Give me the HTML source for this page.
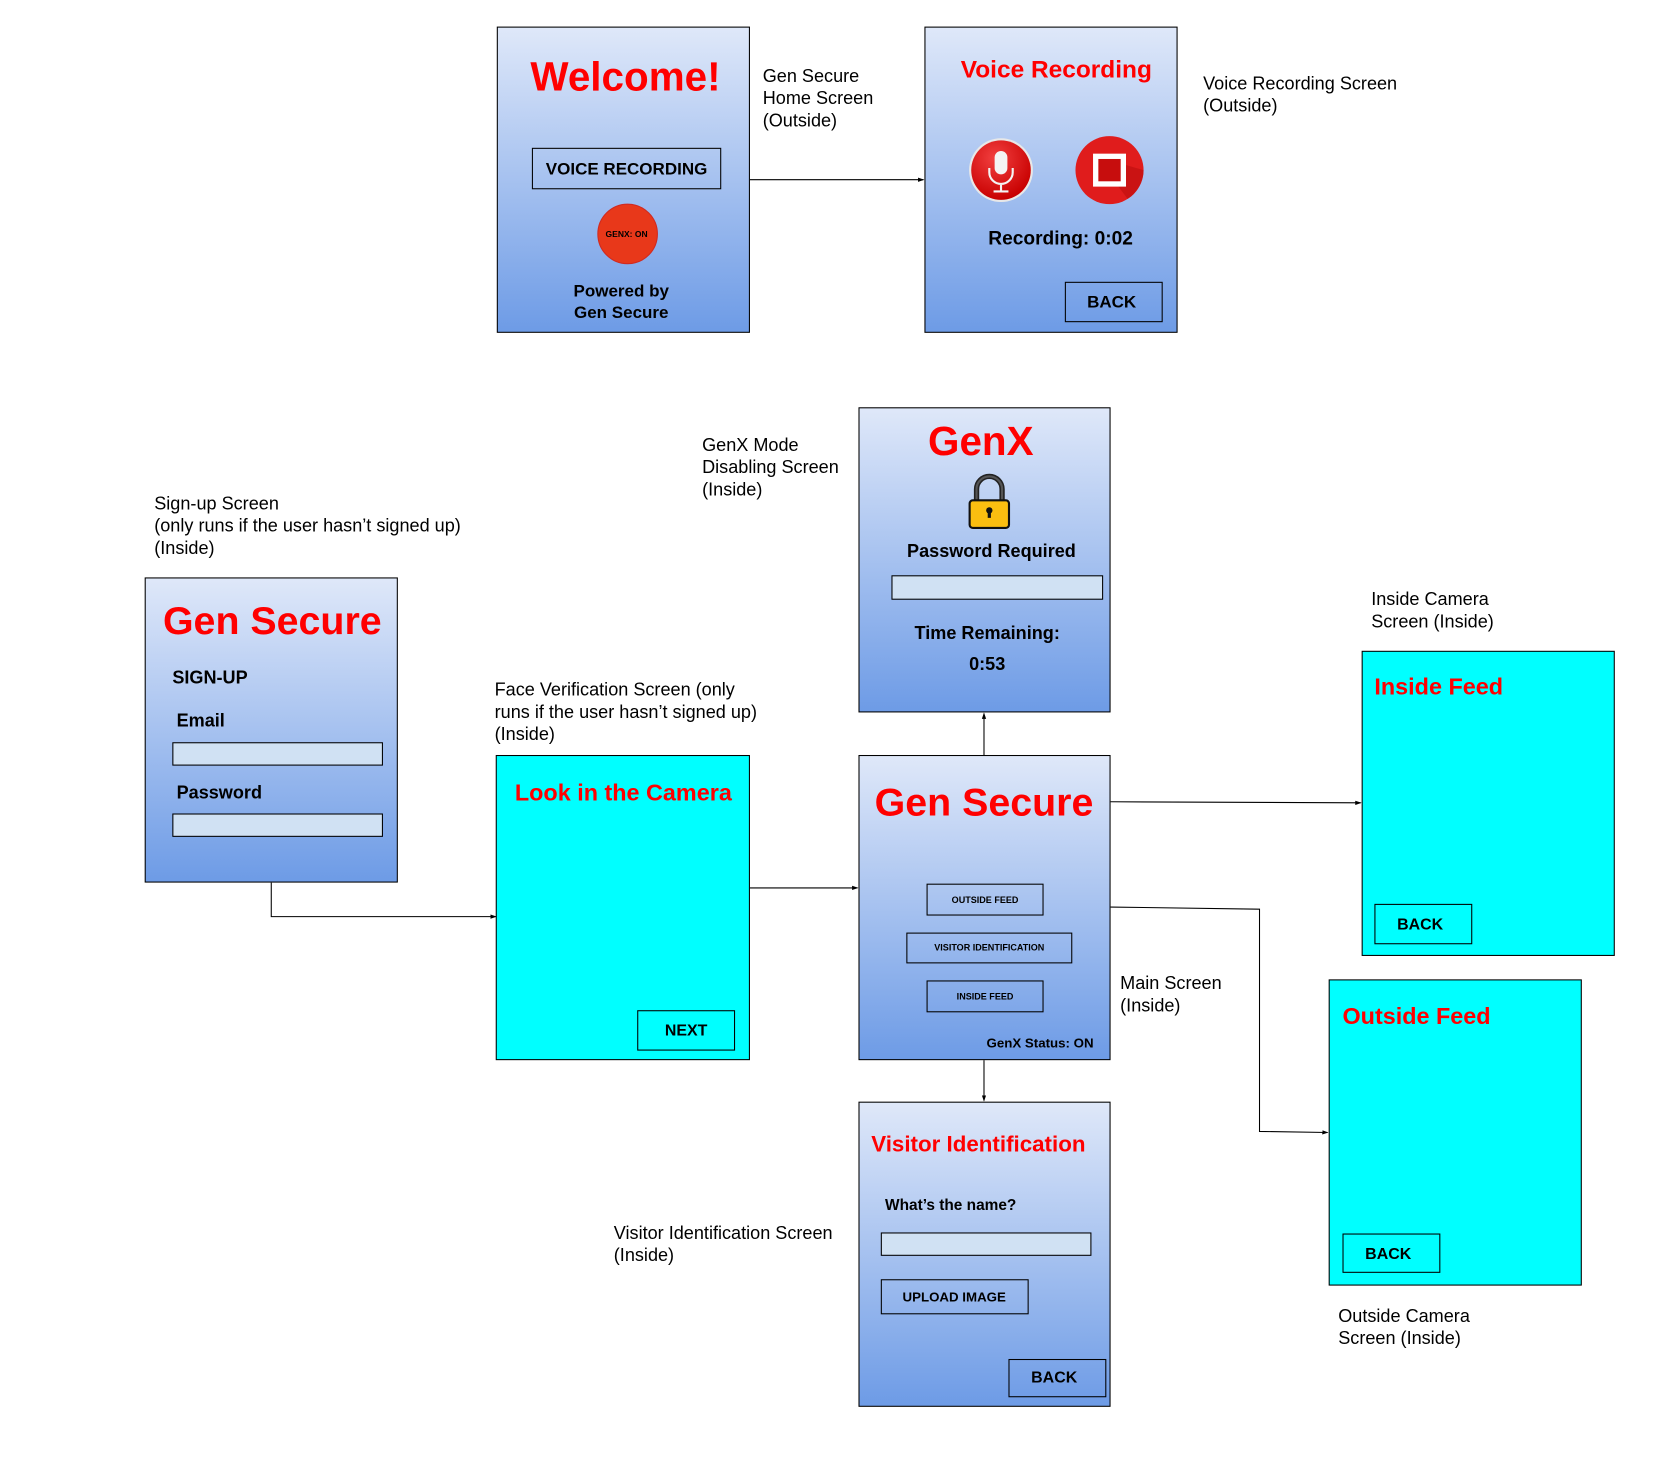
<!DOCTYPE html>
<html><head><meta charset="utf-8">
<style>
html,body{margin:0;padding:0;background:#fff;}
svg{display:block;}
text{font-family:"Liberation Sans",Arial,sans-serif;}
.b{font-weight:bold;}
.lbl{font-size:17px;fill:#000;}
.red{fill:#ff0000;font-weight:bold;}
</style></head>
<body>
<svg width="1668" height="1460" viewBox="0 0 1568 1373" preserveAspectRatio="none" xmlns="http://www.w3.org/2000/svg">
<defs>
<linearGradient id="g" x1="0" y1="0" x2="0" y2="1">
<stop offset="0" stop-color="#dfe8f9"/>
<stop offset="1" stop-color="#6d9be6"/>
</linearGradient>
<marker id="ar" markerWidth="6" markerHeight="6" refX="5" refY="3" orient="auto" markerUnits="userSpaceOnUse">
<path d="M0,1 L6,3 L0,5 z" fill="#000"/>
</marker>
<radialGradient id="mic" cx="0.4" cy="0.3" r="0.7">
<stop offset="0" stop-color="#f24040"/><stop offset="1" stop-color="#c80000"/>
</radialGradient>
</defs>

<!-- connectors -->
<g stroke="#000" stroke-width="1" fill="none">
<path d="M705,169 H868" marker-end="url(#ar)"/>
<path d="M255,830 V862 H466" marker-end="url(#ar)"/>
<path d="M705,835 H806" marker-end="url(#ar)"/>
<path d="M925,710 V671" marker-end="url(#ar)"/>
<path d="M1044,754 L1279,755" marker-end="url(#ar)"/>
<path d="M1044,853 L1184,855 V1064 L1248,1065" marker-end="url(#ar)"/>
<path d="M925,997 V1035" marker-end="url(#ar)"/>
</g>

<!-- Home screen -->
<rect x="467.5" y="25.5" width="237" height="287" fill="url(#g)" stroke="#000"/>
<text x="588" y="85" text-anchor="middle" class="red" font-size="38">Welcome!</text>
<rect x="500.5" y="139.5" width="177" height="38" fill="none" stroke="#000"/>
<text x="589" y="164" text-anchor="middle" class="b" font-size="16">VOICE RECORDING</text>
<circle cx="590" cy="220" r="28" fill="#e8381a" stroke="#d02a20"/>
<text x="589" y="223" text-anchor="middle" class="b" font-size="8">GENX: ON</text>
<text x="584" y="279" text-anchor="middle" class="b" font-size="16">Powered by</text>
<text x="584" y="299" text-anchor="middle" class="b" font-size="16">Gen Secure</text>
<text x="717" y="77" class="lbl">Gen Secure</text>
<text x="717" y="98" class="lbl">Home Screen</text>
<text x="717" y="119" class="lbl">(Outside)</text>

<!-- Voice recording -->
<rect x="869.5" y="25.5" width="237" height="287" fill="url(#g)" stroke="#000"/>
<text x="993" y="73" text-anchor="middle" class="red" font-size="23">Voice Recording</text>
<circle cx="941" cy="160" r="30" fill="#e8e8e8"/>
<circle cx="941" cy="160" r="28" fill="url(#mic)"/>
<rect x="935" y="142" width="12" height="22" rx="6" fill="#f4f4f4"/>
<path d="M930,158 v4 a11,11 0 0 0 22,0 v-4 M941,173 v6 M934,180 h14" stroke="#f4f4f4" stroke-width="2" fill="none"/>
<circle cx="1043" cy="160" r="32" fill="#e01c1c"/>
<path d="M1030,147 L1075,160 A32,32 0 0 1 1060,187 Z" fill="#c01010" opacity="0.7"/>
<rect x="1030" y="147" width="26" height="26" fill="#c70d0d" stroke="#fff" stroke-width="5"/>
<text x="997" y="230" text-anchor="middle" class="b" font-size="18">Recording: 0:02</text>
<rect x="1001.5" y="265.5" width="91" height="37" fill="none" stroke="#000"/>
<text x="1045" y="289" text-anchor="middle" class="b" font-size="16">BACK</text>
<text x="1131" y="84" class="lbl">Voice Recording Screen</text>
<text x="1131" y="105" class="lbl">(Outside)</text>

<!-- GenX -->
<rect x="807.5" y="383.5" width="236" height="286" fill="url(#g)" stroke="#000"/>
<text x="922" y="428" text-anchor="middle" class="red" font-size="38">GenX</text>
<path d="M918,472 v-12 a12,12 0 0 1 24,0 v12" stroke="#222" stroke-width="5" fill="none"/>
<path d="M918,472 v-12 a12,12 0 0 1 24,0 v12" stroke="#555" stroke-width="2" fill="none"/>
<rect x="911.5" y="470.5" width="37" height="26" rx="3" fill="#fbbe10" stroke="#111" stroke-width="2"/>
<circle cx="930" cy="480" r="3" fill="#111"/><rect x="928.5" y="480" width="3" height="7" fill="#111"/>
<text x="932" y="524" text-anchor="middle" class="b" font-size="17">Password Required</text>
<rect x="838.5" y="541.5" width="198" height="22" fill="#d0e1f3" stroke="#000"/>
<text x="928" y="601" text-anchor="middle" class="b" font-size="17">Time Remaining:</text>
<text x="928" y="630" text-anchor="middle" class="b" font-size="17">0:53</text>
<text x="660" y="424" class="lbl">GenX Mode</text>
<text x="660" y="445" class="lbl">Disabling Screen</text>
<text x="660" y="466" class="lbl">(Inside)</text>

<!-- Sign-up -->
<rect x="136.5" y="543.5" width="237" height="286" fill="url(#g)" stroke="#000"/>
<text x="256" y="596" text-anchor="middle" class="red" font-size="37">Gen Secure</text>
<text x="162" y="643" class="b" font-size="17">SIGN-UP</text>
<text x="166" y="683" class="b" font-size="17">Email</text>
<rect x="162.5" y="698.5" width="197" height="21" fill="#d0e1f3" stroke="#000"/>
<text x="166" y="751" class="b" font-size="17">Password</text>
<rect x="162.5" y="765.5" width="197" height="21" fill="#d0e1f3" stroke="#000"/>
<text x="145" y="479" class="lbl">Sign-up Screen</text>
<text x="145" y="500" class="lbl">(only runs if the user hasn’t signed up)</text>
<text x="145" y="521" class="lbl">(Inside)</text>

<!-- Face verification -->
<rect x="466.5" y="710.5" width="238" height="286" fill="#00ffff" stroke="#000"/>
<text x="484" y="753" class="red" font-size="22">Look in the Camera</text>
<rect x="599.5" y="950.5" width="91" height="37" fill="none" stroke="#000"/>
<text x="645" y="974" text-anchor="middle" class="b" font-size="15">NEXT</text>
<text x="465" y="654" class="lbl">Face Verification Screen (only</text>
<text x="465" y="675" class="lbl">runs if the user hasn’t signed up)</text>
<text x="465" y="696" class="lbl">(Inside)</text>

<!-- Main -->
<rect x="807.5" y="710.5" width="236" height="286" fill="url(#g)" stroke="#000"/>
<text x="925" y="767" text-anchor="middle" class="red" font-size="37">Gen Secure</text>
<rect x="871.5" y="831.5" width="109" height="29" fill="none" stroke="#000"/>
<text x="926" y="849" text-anchor="middle" class="b" font-size="8.5">OUTSIDE FEED</text>
<rect x="852.5" y="877.5" width="155" height="28" fill="none" stroke="#000"/>
<text x="930" y="894" text-anchor="middle" class="b" font-size="8.5">VISITOR IDENTIFICATION</text>
<rect x="871.5" y="922.5" width="109" height="29" fill="none" stroke="#000"/>
<text x="926" y="940" text-anchor="middle" class="b" font-size="8.5">INSIDE FEED</text>
<text x="1028" y="985" text-anchor="end" class="b" font-size="12.5">GenX Status: ON</text>
<text x="1053" y="930" class="lbl">Main Screen</text>
<text x="1053" y="951" class="lbl">(Inside)</text>

<!-- Inside feed -->
<rect x="1280.5" y="612.5" width="237" height="286" fill="#00ffff" stroke="#000"/>
<text x="1292" y="653" class="red" font-size="22">Inside Feed</text>
<rect x="1292.5" y="850.5" width="91" height="37" fill="none" stroke="#000"/>
<text x="1335" y="874" text-anchor="middle" class="b" font-size="15">BACK</text>
<text x="1289" y="569" class="lbl">Inside Camera</text>
<text x="1289" y="590" class="lbl">Screen (Inside)</text>

<!-- Outside feed -->
<rect x="1249.5" y="921.5" width="237" height="287" fill="#00ffff" stroke="#000"/>
<text x="1262" y="963" class="red" font-size="22">Outside Feed</text>
<rect x="1262.5" y="1160.5" width="91" height="36" fill="none" stroke="#000"/>
<text x="1305" y="1184" text-anchor="middle" class="b" font-size="15">BACK</text>
<text x="1258" y="1243" class="lbl">Outside Camera</text>
<text x="1258" y="1264" class="lbl">Screen (Inside)</text>

<!-- Visitor -->
<rect x="807.5" y="1036.5" width="236" height="286" fill="url(#g)" stroke="#000"/>
<text x="819" y="1083" class="red" font-size="21">Visitor Identification</text>
<text x="832" y="1138" class="b" font-size="14.5">What’s the name?</text>
<rect x="828.5" y="1159.5" width="197" height="21" fill="#d0e1f3" stroke="#000"/>
<rect x="828.5" y="1203.5" width="138" height="32" fill="none" stroke="#000"/>
<text x="897" y="1224" text-anchor="middle" class="b" font-size="12.5">UPLOAD IMAGE</text>
<rect x="948.5" y="1278.5" width="91" height="35" fill="none" stroke="#000"/>
<text x="991" y="1300" text-anchor="middle" class="b" font-size="15">BACK</text>
<text x="577" y="1165" class="lbl">Visitor Identification Screen</text>
<text x="577" y="1186" class="lbl">(Inside)</text>
</svg>
</body></html>
